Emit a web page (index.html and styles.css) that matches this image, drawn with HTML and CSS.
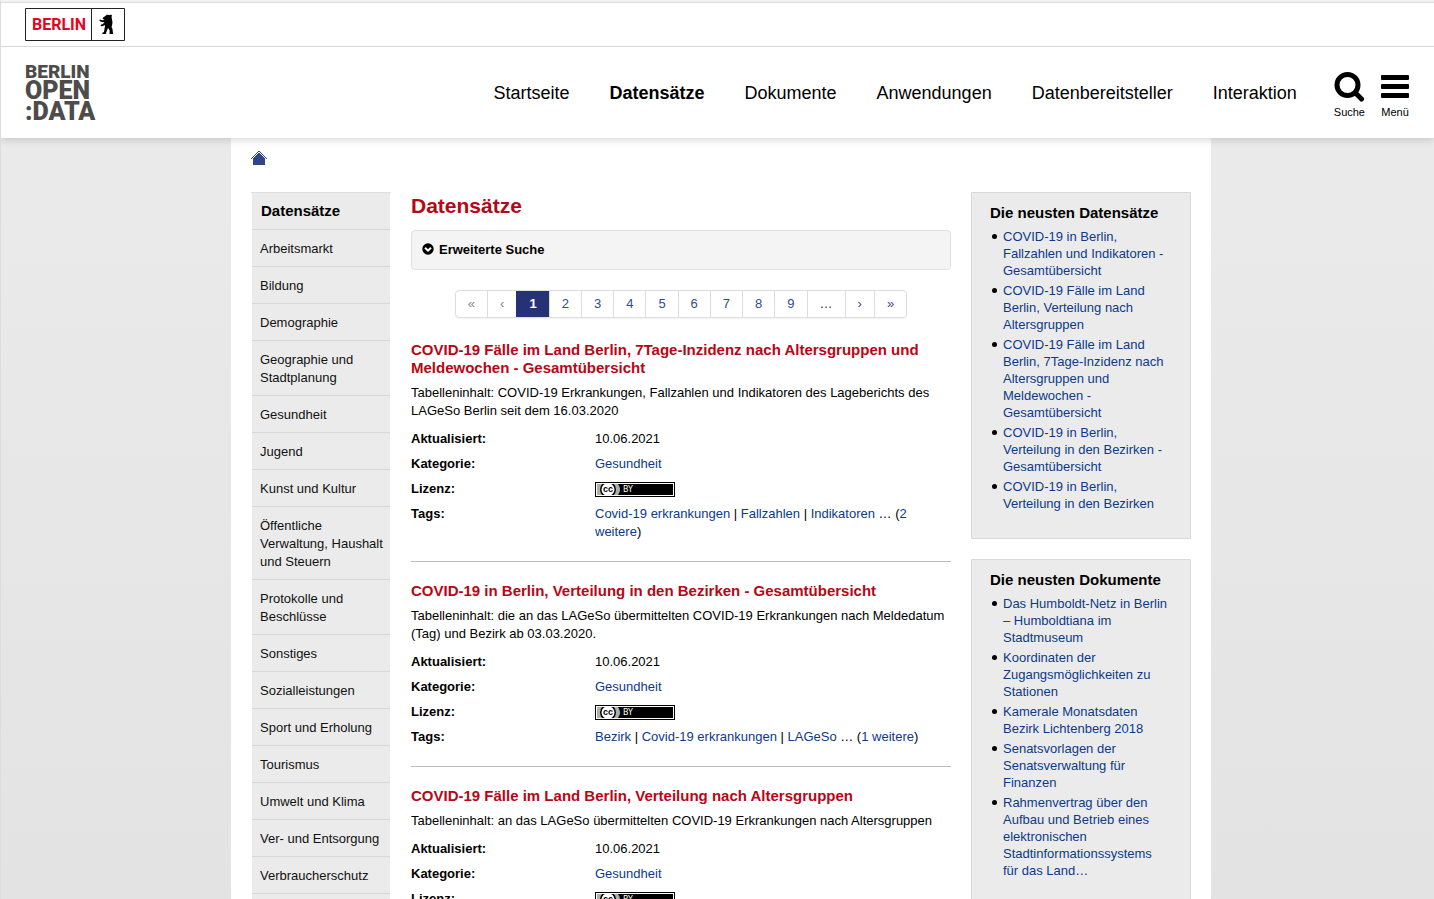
FILE: index.html
```html
<!DOCTYPE html>
<html lang="de">
<head>
<meta charset="utf-8">
<title>Datensätze | Offene Daten Berlin</title>
<link rel="stylesheet" href="styles.css">
</head>
<body>
<div class="page">
<header class="site-header">
  <div class="topbar">
    <a href="#" class="berlin-logo" aria-label="Berlin.de">
      <svg width="100" height="33" viewBox="0 0 100 33">
        <path d="M.5.5h99v32H.5zM66.500.5v32" fill="#fff" stroke="#222"/>
        <text x="7" y="22" class="berlin-word">BERLIN</text>
        <path d="M81 7.500l1-1 1 .5h2l1-.5 1 1-.5 1.500.5 2.500.5 3-.5 3-.5 1.500 1 2 .500 4.500.5.500h-4l.200-3.500-1.700-2.500-1 2.500-1 2.500.2 1h-4l.3-1.300 1.500-.700.500-3.500.5-2-.3-1.500-1.700 1-2 .2-.5-1 1-.700 1.500-.500 1.500-2-2 .200-2.500-1-.7-1.300 1-.500 1.700.8 2.700-.2-2-1.200.2-1z"/>
      </svg>
    </a>
  </div>
  <div class="brandbar">
    <a href="#" class="od-logo"><span class="od-berlin">BERLIN</span><span class="od-open">OPEN</span><span class="od-data">:DATA</span></a>
    <nav class="main-nav">
      <a href="#">Startseite</a><a href="#" class="current">Datensätze</a><a href="#">Dokumente</a><a href="#">Anwendungen</a><a href="#">Datenbereitsteller</a><a href="#">Interaktion</a>
    </nav>
    <div class="tools">
      <button type="button"><svg width="31" height="31" viewBox="0 0 31 31"><circle cx="13.500" cy="14" r="10.500" fill="none" stroke="#000" stroke-width="5"/><path d="M21.500 22l6 6" stroke="#000" stroke-width="5" stroke-linecap="round"/></svg>Suche</button>
      <button type="button"><svg width="28" height="31" viewBox="0 0 28 31"><rect y="4" width="28" height="5" rx="1"/><rect y="13" width="28" height="5" rx="1"/><rect y="22" width="28" height="5" rx="1"/></svg>Menü</button>
    </div>
  </div>
</header>
<main class="content">
  <nav class="breadcrumb"><a href="#" aria-label="Startseite"><svg width="16" height="15" viewBox="0 0 16 15" shape-rendering="crispEdges" fill="#2f4587"><path d="M7 0h2v1h1v1h1v1h1v1h1v1h1v1h1v1h1v1h-1v-1h-1v-1h-1v-1h-1v-1h-1v-1h-1v-1h-1v-1h-2v1h-1v1h-1v1h-1v1h-1v1h-1v1h-1v1h-1v-1h1v-1h1v-1h1v-1h1v-1h1v-1h1v-1h1z"/><path d="M7 2h2v1h1v1h1v1h1v1h1v1h1v7H2V7h1V6h1V5h1V4h1V3h1z"/></svg></a></nav>
  <div class="columns">
    <nav class="side-nav">
      <h2>Datensätze</h2>
      <ul>
        <li><a href="#">Arbeitsmarkt</a></li>
        <li><a href="#">Bildung</a></li>
        <li><a href="#">Demographie</a></li>
        <li><a href="#">Geographie und Stadtplanung</a></li>
        <li><a href="#">Gesundheit</a></li>
        <li><a href="#">Jugend</a></li>
        <li><a href="#">Kunst und Kultur</a></li>
        <li><a href="#">Öffentliche Verwaltung, Haushalt und Steuern</a></li>
        <li><a href="#">Protokolle und Beschlüsse</a></li>
        <li><a href="#">Sonstiges</a></li>
        <li><a href="#">Sozialleistungen</a></li>
        <li><a href="#">Sport und Erholung</a></li>
        <li><a href="#">Tourismus</a></li>
        <li><a href="#">Umwelt und Klima</a></li>
        <li><a href="#">Ver- und Entsorgung</a></li>
        <li><a href="#">Verbraucherschutz</a></li>
        <li><a href="#">Verkehr</a></li>
      </ul>
    </nav>
    <section class="results">
      <h1>Datensätze</h1>
      <button type="button" class="advanced"><svg width="12" height="14" viewBox="0 0 12 14"><circle cx="6" cy="6" r="5.700"/><path d="M3 4.700l3 3 3-3" fill="none" stroke="#fff" stroke-width="2"/></svg>Erweiterte Suche</button>
      <nav class="pagination">
        <span class="off">«</span><span class="off">‹</span><a href="#" class="active">1</a><a href="#">2</a><a href="#">3</a><a href="#">4</a><a href="#">5</a><a href="#">6</a><a href="#">7</a><a href="#">8</a><a href="#">9</a><span>…</span><a href="#">›</a><a href="#">»</a>
      </nav>
      <article class="dataset">
        <h2><a href="#">COVID-19 Fälle im Land Berlin, 7Tage-Inzidenz nach Altersgruppen und Meldewochen - Gesamtübersicht</a></h2>
        <p>Tabelleninhalt: COVID-19 Erkrankungen, Fallzahlen und Indikatoren des Lageberichts des LAGeSo Berlin seit dem 16.03.2020</p>
        <dl>
          <dt>Aktualisiert:</dt><dd>10.06.2021</dd>
          <dt>Kategorie:</dt><dd><a href="#">Gesundheit</a></dd>
          <dt>Lizenz:</dt><dd><svg class="cc" width="80" height="15" viewBox="0 0 80 15"><path d="M0 0h80v15H0z"/><path d="M1 1h78v13H1z" fill="#fff"/><path d="M2 2h76v11H2z"/><path d="M2 2h21q4 5.500 0 11H2z" fill="#abb1a8"/><circle cx="13" cy="7.500" r="8"/><circle cx="13" cy="7.500" r="6.500" fill="#fff"/><path d="M0 0h80v2H0zM0 13h80v2H0z"/><path d="M1 1h78v1H1zM1 13h78v1H1z" fill="#fff"/><text x="8" y="10" class="cc-mark">cc</text><text x="28" y="10" class="cc-by">BY</text></svg></dd>
          <dt>Tags:</dt><dd><a href="#">Covid-19 erkrankungen</a> | <a href="#">Fallzahlen</a> | <a href="#">Indikatoren</a> … (<a href="#">2 weitere</a>)</dd>
        </dl>
      </article>
      <article class="dataset">
        <h2><a href="#">COVID-19 in Berlin, Verteilung in den Bezirken - Gesamtübersicht</a></h2>
        <p>Tabelleninhalt: die an das LAGeSo übermittelten COVID-19 Erkrankungen nach Meldedatum (Tag) und Bezirk ab 03.03.2020.</p>
        <dl>
          <dt>Aktualisiert:</dt><dd>10.06.2021</dd>
          <dt>Kategorie:</dt><dd><a href="#">Gesundheit</a></dd>
          <dt>Lizenz:</dt><dd><svg class="cc" width="80" height="15" viewBox="0 0 80 15"><path d="M0 0h80v15H0z"/><path d="M1 1h78v13H1z" fill="#fff"/><path d="M2 2h76v11H2z"/><path d="M2 2h21q4 5.500 0 11H2z" fill="#abb1a8"/><circle cx="13" cy="7.500" r="8"/><circle cx="13" cy="7.500" r="6.500" fill="#fff"/><path d="M0 0h80v2H0zM0 13h80v2H0z"/><path d="M1 1h78v1H1zM1 13h78v1H1z" fill="#fff"/><text x="8" y="10" class="cc-mark">cc</text><text x="28" y="10" class="cc-by">BY</text></svg></dd>
          <dt>Tags:</dt><dd><a href="#">Bezirk</a> | <a href="#">Covid-19 erkrankungen</a> | <a href="#">LAGeSo</a> … (<a href="#">1 weitere</a>)</dd>
        </dl>
      </article>
      <article class="dataset">
        <h2><a href="#">COVID-19 Fälle im Land Berlin, Verteilung nach Altersgruppen</a></h2>
        <p>Tabelleninhalt: an das LAGeSo übermittelten COVID-19 Erkrankungen nach Altersgruppen</p>
        <dl>
          <dt>Aktualisiert:</dt><dd>10.06.2021</dd>
          <dt>Kategorie:</dt><dd><a href="#">Gesundheit</a></dd>
          <dt>Lizenz:</dt><dd><svg class="cc" width="80" height="15" viewBox="0 0 80 15"><path d="M0 0h80v15H0z"/><path d="M1 1h78v13H1z" fill="#fff"/><path d="M2 2h76v11H2z"/><path d="M2 2h21q4 5.500 0 11H2z" fill="#abb1a8"/><circle cx="13" cy="7.500" r="8"/><circle cx="13" cy="7.500" r="6.500" fill="#fff"/><path d="M0 0h80v2H0zM0 13h80v2H0z"/><path d="M1 1h78v1H1zM1 13h78v1H1z" fill="#fff"/><text x="8" y="10" class="cc-mark">cc</text><text x="28" y="10" class="cc-by">BY</text></svg></dd>
        </dl>
      </article>
    </section>
    <aside class="teasers">
      <section class="teaser">
        <h2>Die neusten Datensätze</h2>
        <ul>
          <li><a href="#">COVID-19 in Berlin, Fallzahlen und Indikatoren - Gesamtübersicht</a></li>
          <li><a href="#">COVID-19 Fälle im Land Berlin, Verteilung nach Altersgruppen</a></li>
          <li><a href="#">COVID-19 Fälle im Land Berlin, 7Tage-Inzidenz nach Altersgruppen und Meldewochen - Gesamtübersicht</a></li>
          <li><a href="#">COVID-19 in Berlin, Verteilung in den Bezirken - Gesamtübersicht</a></li>
          <li><a href="#">COVID-19 in Berlin, Verteilung in den Bezirken</a></li>
        </ul>
      </section>
      <section class="teaser">
        <h2>Die neusten Dokumente</h2>
        <ul>
          <li><a href="#">Das Humboldt-Netz in Berlin – Humboldtiana im Stadtmuseum</a></li>
          <li><a href="#">Koordinaten der Zugangsmöglichkeiten zu Stationen</a></li>
          <li><a href="#">Kamerale Monatsdaten Bezirk Lichtenberg 2018</a></li>
          <li><a href="#">Senatsvorlagen der Senatsverwaltung für Finanzen</a></li>
          <li><a href="#">Rahmenvertrag über den Aufbau und Betrieb eines elektronischen Stadtinformationssystems für das Land…</a></li>
        </ul>
      </section>
    </aside>
  </div>
</main>
</div>
</body>
</html>
```
FILE: styles.css
```css
* { box-sizing: border-box; }
body {
  margin: 0;
  font: 13px/18px "Liberation Sans", Arial, sans-serif;
  color: #000;
}
h1, h2, p, ul, dl, dd { margin: 0; padding: 0; }
a { color: #0b3a8a; text-decoration: none; }
button { font: inherit; color: inherit; cursor: pointer; }

/* scrolling page area */
.page {
  height: 100vh;
  overflow-y: auto;
  scrollbar-width: none;
  border-top: 2px solid #f3f3f3;
  border-left: 1px solid #dcdcdc;
  background: linear-gradient(#ececec, #e3e3e3);
}

/* header */
.site-header {
  position: relative;
  background: #fff;
  border-top: 1px solid #dcdcdc;
  box-shadow: 0 2px 8px rgba(0, 0, 0, .16);
}
.topbar {
  display: flex;
  align-items: flex-start;
  height: 44px;
  padding: 5px 24px 0;
  border-bottom: 1px solid #d8d8d8;
}
.berlin-word { font: 700 16px Roboto, sans-serif; fill: #e40422; }
.brandbar {
  display: flex;
  align-items: center;
  height: 91px;
  padding: 0 25px 0 24px;
}
.od-logo {
  display: flex;
  flex-direction: column;
  gap: 1px;
  margin-right: auto;
  font-family: Roboto, sans-serif;
  font-weight: 900;
  color: #4d4c4a;
}
.od-berlin { font-size: 19px; line-height: 16px; }
.od-open { font-size: 25px; line-height: 20px; }
.od-data { font-size: 25px; line-height: 20px; }
.main-nav { display: flex; gap: 40px; font-size: 18px; line-height: 24px; }
.main-nav a { color: #000; }
.main-nav .current { font-weight: 700; }
.tools { display: flex; gap: 16px; margin: 5px 0 0 37px; }
.tools button {
  display: flex;
  flex-direction: column;
  align-items: center;
  gap: 3px;
  padding: 0;
  border: 0;
  background: none;
  font-size: 11px;
  line-height: 14px;
}

/* content frame */
.content {
  width: 987px;
  max-width: 100%;
  margin: 0 auto;
  border-left: 7px solid transparent;
  padding: 13px 20px 40px;
  background: #fff padding-box;
}
.breadcrumb { display: flex; height: 41px; }
.columns { display: grid; grid-template-columns: 140px 1fr 220px; gap: 20px; align-items: start; }

.side-nav { border-top: 1px solid #dedede; padding: 0 1px; }
.side-nav h2 {
  padding: 9px;
  font-size: 15px;
  line-height: 18px;
  background: #ebebeb;
}
.side-nav ul { list-style: none; background: #ebebeb; }
.side-nav li { border-top: 1px solid #d8d8d8; padding: 10px 6px 8px 8px; }
.side-nav a { color: #111; }

/* results */
.results h1 { font-size: 21px; line-height: 28px; margin-bottom: 10px; color: #b90615; }
.advanced {
  display: flex;
  align-items: center;
  gap: 5px;
  width: 100%;
  height: 40px;
  padding: 0 10px;
  border: 1px solid #e1e1e1;
  border-radius: 4px;
  background: #f4f4f4;
  font-weight: 700;
}
.pagination {
  display: flex;
  width: fit-content;
  margin: 20px auto 23px;
  border: 1px solid #ddd;
  border-radius: 4px;
  box-shadow: 0 1px 2px rgba(0, 0, 0, .05);
}
.pagination > * { padding: 3px 12px; line-height: 20px; border-left: 1px solid #ddd; color: #333; }
.pagination > :first-child { border-left: 0; }
.pagination a { color: #354990; }
.pagination .off { color: #888; }
.pagination .active { background: #253276; border-color: #253276; color: #fff; font-weight: 700; }

.dataset { padding-bottom: 20px; border-bottom: 1px solid #bbb; margin-bottom: 20px; }
.dataset h2 { margin-bottom: 7px; font-size: 15px; line-height: 18px; }
.dataset h2 a { color: #b90615; }
.dataset p { margin-bottom: 10px; }
.dataset dl { display: grid; grid-template-columns: 184px 1fr; row-gap: 7px; }
.dataset dt { font-weight: 700; }
.dataset dd { padding-right: 20px; }
.cc { display: block; margin-top: 2px; }
.cc-mark { font: 700 9px "Liberation Sans", sans-serif; }
.cc-by { font: 8px "DejaVu Sans", sans-serif; fill: #fff; }

/* teasers */
.teasers { display: grid; gap: 20px; }
.teaser {
  padding: 11px 20px 23px 18px;
  border: 1px solid #d9d9d9;
  border-radius: 1px;
  background: #ebebeb;
}
.teaser h2 { font-size: 15px; line-height: 18px; margin-bottom: 6px; margin-right: -2px; }
.teaser ul { padding-left: 13px; line-height: 17px; list-style: none; }
.teaser li { position: relative; margin-bottom: 3px; }
.teaser li::before {
  content: "";
  position: absolute;
  left: -11px;
  top: 6px;
  width: 5px;
  height: 5px;
  border-radius: 50%;
  background: #000;
}
```
